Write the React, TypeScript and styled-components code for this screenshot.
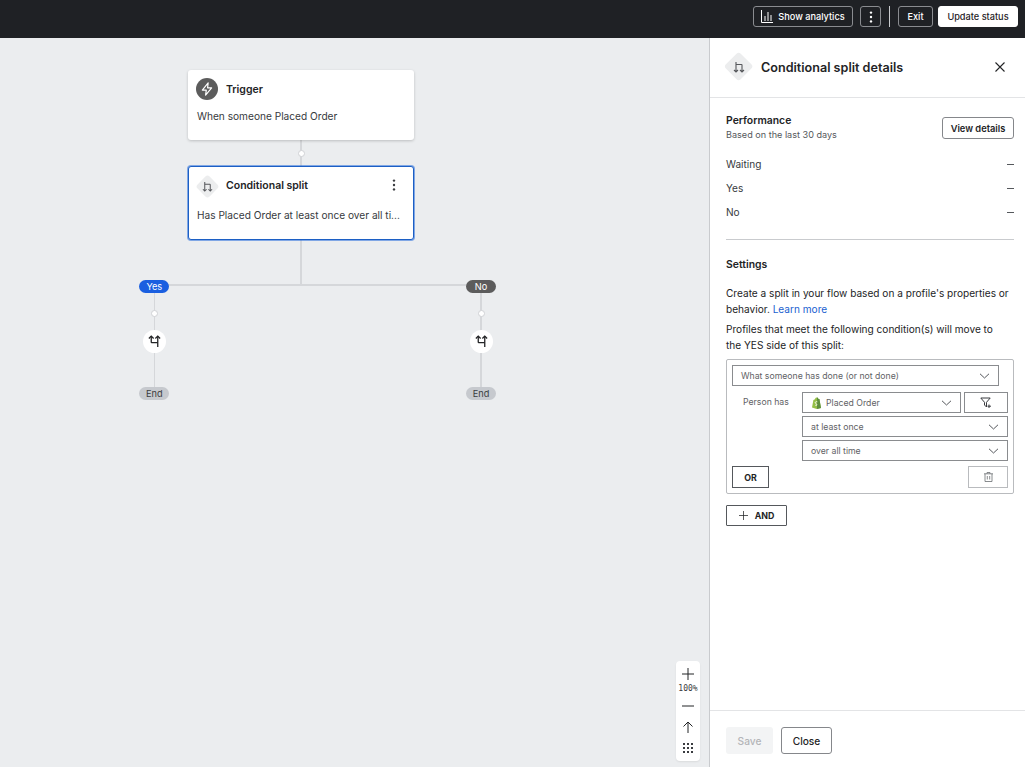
import React from "react";
import styled, { createGlobalStyle } from "styled-components";

const Global = createGlobalStyle`
  html, body { margin: 0; padding: 0; height: 100%; overflow: hidden; }
  body { font-family: Inter, "Liberation Sans", sans-serif; color: #232426; background: #fff; }
  * { box-sizing: border-box; }
`;

const Page = styled.div`
  width: 1025px;
  height: 767px;
  display: flex;
  flex-direction: column;
`;

const TopBar = styled.header`
  height: 38px;
  background: #1f2125;
  display: flex;
  align-items: center;
  justify-content: flex-end;
  padding: 0 7px 5px 0;
  flex: none;
`;

const DarkButton = styled.button<{ $w: number }>`
  width: ${(p) => p.$w}px;
  height: 21px;
  border: 1px solid #8a8c90;
  border-radius: 3px;
  background: transparent;
  color: #fff;
  font: 500 9.2px Inter, sans-serif;
  padding: 0;
  display: flex;
  align-items: center;
  justify-content: center;
  gap: 5px;
`;

const KebabButton = styled(DarkButton)`
  margin-left: 7px;
`;

const ExitButton = styled(DarkButton)`
  margin-right: 5px;
`;

const WhiteButton = styled(DarkButton)`
  background: #fff;
  color: #1f2125;
  border-color: #fff;
`;

const BarDivider = styled.div`
  width: 1px;
  height: 21px;
  background: #c9cbce;
  margin: 0 8px;
`;

const Body = styled.div`
  flex: 1;
  display: flex;
  min-height: 0;
`;

const Canvas = styled.main`
  position: relative;
  flex: 1;
  background: #ebedef;
`;

const Card = styled.div<{ $top: number; $height: number; $selected?: boolean }>`
  position: absolute;
  left: 188px;
  top: ${(p) => p.$top}px;
  width: 226px;
  height: ${(p) => p.$height}px;
  background: #fff;
  border-radius: 3px;
  border: ${(p) => (p.$selected ? "1px solid #1c5fc4" : "none")};
  box-shadow: ${(p) => (p.$selected ? "0 0 0 1px rgba(40, 110, 220, 0.55)" : "0 1px 3px rgba(0, 0, 0, 0.2)")};
  padding: ${(p) => (p.$selected ? "7px 8px 0 7px" : "8px 8px 0")};
`;

const CardHead = styled.div`
  display: flex;
  align-items: center;
  gap: 8px;
  height: 22px;
`;

const CardTitle = styled.div`
  font-size: 10.5px;
  font-weight: 600;
  color: #232426;
  flex: 1;
`;

const CardText = styled.div<{ $gap: number }>`
  margin: ${(p) => p.$gap}px 0 0 1px;
  font-size: 10.15px;
  line-height: 14px;
  color: #373a3e;
  white-space: nowrap;
`;

const RoundIcon = styled.div`
  width: 22px;
  height: 22px;
  border-radius: 50%;
  background: #5c5c5c;
  display: flex;
  align-items: center;
  justify-content: center;
`;

const Diamond = styled.div<{ $size: number }>`
  width: ${(p) => p.$size}px;
  height: ${(p) => p.$size}px;
  flex: none;
  position: relative;
  display: flex;
  align-items: center;
  justify-content: center;
  &::before {
    content: "";
    position: absolute;
    inset: 14.6%;
    background: #ecedee;
    border-radius: 3px;
    transform: rotate(45deg);
  }
  svg { position: relative; }
`;

const CardDiamond = styled(Diamond)`
  margin: 2px -1px 0 -1px;
`;

const CardMenu = styled.span`
  display: flex;
  margin-right: 9px;
`;

const Line = styled.div<{ $x: number; $y: number; $w?: number; $h?: number }>`
  position: absolute;
  left: ${(p) => p.$x}px;
  top: ${(p) => p.$y}px;
  width: ${(p) => p.$w ?? 1.5}px;
  height: ${(p) => p.$h ?? 1.5}px;
  background: #d5d7da;
`;

const Dot = styled.div<{ $x: number; $y: number }>`
  position: absolute;
  left: ${(p) => p.$x - 3.5}px;
  top: ${(p) => p.$y - 3.5}px;
  width: 7px;
  height: 7px;
  border-radius: 50%;
  background: #fff;
  border: 1px solid #d0d2d5;
`;

const Pill = styled.div<{ $x: number; $y: number; $bg: string; $fg: string }>`
  position: absolute;
  left: ${(p) => p.$x - 15}px;
  top: ${(p) => p.$y}px;
  width: 30px;
  height: 13px;
  border-radius: 7px;
  background: ${(p) => p.$bg};
  color: ${(p) => p.$fg};
  font-size: 9.2px;
  line-height: 13px;
  text-align: center;
`;

const BranchNode = styled.div<{ $x: number }>`
  position: absolute;
  left: ${(p) => p.$x - 11.5}px;
  top: 292px;
  width: 23px;
  height: 23px;
  border-radius: 50%;
  background: #fff;
  display: flex;
  align-items: center;
  justify-content: center;
`;

const ZoomBar = styled.div`
  position: absolute;
  left: 676px;
  top: 623px;
  width: 24px;
  height: 100px;
  padding-top: 2px;
  background: #fff;
  border-radius: 4px;
  box-shadow: 0 1px 2px rgba(0, 0, 0, 0.08);
  display: flex;
  flex-direction: column;
  align-items: center;
`;

const ZoomCell = styled.div<{ $h: number }>`
  height: ${(p) => p.$h}px;
  width: 100%;
  flex: none;
  display: flex;
  align-items: center;
  justify-content: center;
`;

const ZoomLabel = styled.div`
  font: 8px/10px "DejaVu Sans Mono", monospace;
  color: #3a3c40;
`;

const Panel = styled.aside`
  width: 316px;
  flex: none;
  border-left: 1px solid #c9cbce;
  background: #fff;
  display: flex;
  flex-direction: column;
`;

const PanelHead = styled.div`
  height: 60px;
  flex: none;
  border-bottom: 1px solid #e3e4e6;
  display: flex;
  align-items: center;
  padding: 0 20px 1px 14px;
  gap: 7px;
`;

const PanelTitle = styled.h1`
  flex: 1;
  margin: 0;
  font-size: 12.6px;
  font-weight: 600;
  color: #232426;
`;

const PanelBody = styled.div`
  flex: 1;
  padding: 17px 11px 0 16px;
`;

const PerfHead = styled.div`
  display: flex;
  justify-content: space-between;
  align-items: center;
  height: 26px;
`;

const SectionTitle = styled.div`
  font-size: 10.4px;
  font-weight: 600;
  line-height: 14px;
  color: #232426;
`;

const SubText = styled.div`
  font-size: 9.1px;
  line-height: 14px;
  color: #55585c;
`;

const OutlineButton = styled.button`
  width: 72px;
  height: 22px;
  padding: 0;
  background: #fff;
  border: 1px solid #85878b;
  border-radius: 3px;
  font: 600 9.3px Inter, sans-serif;
  color: #232426;
`;

const StatList = styled.div`
  margin-top: 11px;
  padding-bottom: 15px;
  border-bottom: 1px solid #c9cbce;
`;

const StatRow = styled.div`
  height: 24px;
  display: flex;
  align-items: center;
  justify-content: space-between;
  font-size: 10.1px;
  color: #373a3e;
`;

const Dash = styled.span`
  width: 7px;
  height: 1px;
  background: #55585c;
`;

const SettingsTitle = styled(SectionTitle)`
  margin-top: 18px;
`;

const Para = styled.p<{ $top: number }>`
  margin: ${(p) => p.$top}px 0 0;
  max-width: 284px;
  font-size: 10.1px;
  line-height: 15.5px;
  color: #232426;
`;

const LearnMore = styled.span`
  color: #1a5fd0;
`;

const RuleBox = styled.div`
  margin-top: 6px;
  width: 288px;
  border: 1px solid #b9bbbe;
  border-radius: 2px;
  padding: 5px;
  display: flex;
  flex-direction: column;
`;

const Select = styled.div<{ $w: number }>`
  width: ${(p) => p.$w}px;
  height: 21px;
  border: 1px solid #8a8c8f;
  display: flex;
  align-items: center;
  justify-content: space-between;
  padding: 0 8px;
  font-size: 8.7px;
  color: #5f6265;
  flex: none;
`;

const SelectLabel = styled.span`
  display: flex;
  align-items: center;
  gap: 4px;
`;

const ConditionGrid = styled.div`
  margin-top: 6px;
  display: grid;
  grid-template-columns: 70px 1fr;
`;

const PersonHas = styled.div`
  font-size: 8.7px;
  line-height: 21px;
  padding-left: 11px;
  color: #5f6265;
`;

const ConditionRows = styled.div`
  display: flex;
  flex-direction: column;
  gap: 3px;
`;

const SelectRow = styled.div`
  display: flex;
  gap: 3px;
`;

const FilterButton = styled.div`
  width: 44px;
  height: 21px;
  border: 1px solid #8a8c8f;
  display: flex;
  align-items: center;
  justify-content: center;
`;

const RuleFooter = styled.div`
  margin-top: 5px;
  display: flex;
  justify-content: space-between;
`;

const SquareButton = styled.div`
  height: 22px;
  width: 37px;
  border: 1px solid #55585c;
  display: flex;
  align-items: center;
  justify-content: center;
  font-size: 8.8px;
  font-weight: 700;
  color: #232426;
`;

const TrashButton = styled(SquareButton)`
  width: 40px;
  border-color: #b9bbbe;
`;

const AndButton = styled(SquareButton)`
  width: 61px;
  height: 21px;
  margin-top: 11px;
  gap: 7px;
  border-radius: 1px;
`;

const PanelFoot = styled.div`
  height: 57px;
  flex: none;
  border-top: 1px solid #e3e4e6;
  display: flex;
  align-items: center;
  gap: 8px;
  padding: 3px 0 0 16px;
`;

const SaveButton = styled.button`
  width: 47px;
  height: 27px;
  border: none;
  border-radius: 3px;
  background: #f3f4f5;
  color: #b3b5b8;
  font: 500 10.2px Inter, sans-serif;
`;

const CloseButton = styled.button`
  width: 51px;
  height: 27px;
  background: #fff;
  border: 1px solid #85878b;
  border-radius: 3px;
  color: #232426;
  font: 500 10.2px Inter, sans-serif;
`;

const SplitIcon = ({ size }: { size: number }) => (
  <svg width={size} height={size} viewBox="0 0 12 12" fill="none" stroke="#55575b" strokeWidth="1.1">
    <path d="M3 1v10M1 9l2 2 2-2" />
    <path d="M3 3.500h5.500q.5 0 .5.5v7M7 9l2 2 2-2" />
  </svg>
);

const BranchIcon = () => (
  <svg width="13" height="13" viewBox="0 0 12 12" fill="none" stroke="#232426" strokeWidth="1.2">
    <path d="M.8 3.200 3 1l2.200 2.200" />
    <path d="M3 1v5.500q0 .5.500.5H9" />
    <path d="M6.800 3.200 9 1l2.200 2.200" />
    <path d="M9 1v10" />
  </svg>
);

const ChartIcon = () => (
  <svg width="12" height="13" viewBox="0 0 12 13" fill="none" stroke="#fff" strokeWidth="1">
    <path d="M.5 0v12.500H12" />
    <path d="M4 6v5M7 2v9M10 5v6" />
  </svg>
);

const Chevron = () => (
  <svg width="11" height="6" viewBox="0 0 11 6" fill="none" stroke="#55585c" strokeWidth="1">
    <path d="M1 .8 5.500 5 10 .8" />
  </svg>
);

const Kebab = ({ color }: { color: string }) => (
  <svg width="4" height="12" viewBox="0 0 4 12" fill={color}>
    <circle cx="2" cy="1.600" r="1.200" />
    <circle cx="2" cy="6" r="1.200" />
    <circle cx="2" cy="10.400" r="1.200" />
  </svg>
);

const PlusIcon = ({ size }: { size: number }) => (
  <svg width={size} height={size} viewBox="0 0 12 12" stroke="#232426" strokeWidth="1">
    <path d="M6 0v12M0 6h12" />
  </svg>
);

const ShopifyIcon = () => (
  <svg width="11" height="12" viewBox="0 0 11 12">
    <path d="M1 10.400 2.400 3c1-.3 1.400-.6 1.700-1.200C4.500.9 5.100.4 5.800.5c.9 0 1.400.8 1.600 1.500l1 .1 1.600 9-4.300.9z" fill="#95bf47" />
    <path d="M8.400 2.100 10 11.100l-4 .9V.6c.8 0 1.300.7 1.500 1.400z" fill="#5e8e3e" />
    <path d="M6.300 4.800c-1.500-.5-2.300.5-2 1.200.3.800 1.700.9 1.600 1.900-.1.700-1 .7-1.700.2" fill="none" stroke="#fff" strokeWidth=".9" />
  </svg>
);

export default function App() {
  return (
    <Page>
      <Global />
      <TopBar>
        <DarkButton $w={100}>
          <ChartIcon />
          Show analytics
        </DarkButton>
        <KebabButton $w={21}>
          <Kebab color="#fff" />
        </KebabButton>
        <BarDivider />
        <ExitButton $w={35}>Exit</ExitButton>
        <WhiteButton $w={80}>Update status</WhiteButton>
      </TopBar>
      <Body>
        <Canvas>
          <Line $x={300.25} $y={102} $h={28} />
          <Dot $x={301} $y={115.7} />
          <Line $x={300.25} $y={202} $h={45} />
          <Line $x={154} $y={246.25} $w={327} />
          <Line $x={153.5} $y={255} $h={98} />
          <Line $x={480.25} $y={255} $h={98} />
          <Dot $x={154.3} $y={275.3} />
          <Dot $x={481} $y={275.3} />

          <Card $top={32} $height={70}>
            <CardHead>
              <RoundIcon>
                <svg width="14" height="14" viewBox="0 0 12 12" fill="none" stroke="#fff" strokeWidth="1" strokeLinejoin="round">
                  <path d="M7 .8 2 7h3.400L4.800 11.200 10 5H6.500z" />
                </svg>
              </RoundIcon>
              <CardTitle>Trigger</CardTitle>
            </CardHead>
            <CardText $gap={9}>When someone Placed Order</CardText>
          </Card>

          <Card $top={128} $height={74} $selected>
            <CardHead>
              <CardDiamond $size={24}>
                <SplitIcon size={11} />
              </CardDiamond>
              <CardTitle>Conditional split</CardTitle>
              <CardMenu>
                <Kebab color="#3a3c40" />
              </CardMenu>
            </CardHead>
            <CardText $gap={12}>Has Placed Order at least once over all ti...</CardText>
          </Card>

          <Pill $x={154.3} $y={242} $bg="#1a5fe0" $fg="#fff">Yes</Pill>
          <Pill $x={481} $y={242} $bg="#5c5c5c" $fg="#fff">No</Pill>
          <BranchNode $x={154.2}><BranchIcon /></BranchNode>
          <BranchNode $x={481}><BranchIcon /></BranchNode>
          <Pill $x={154.3} $y={349} $bg="#c6c9ce" $fg="#3a3c40">End</Pill>
          <Pill $x={481} $y={349} $bg="#c6c9ce" $fg="#3a3c40">End</Pill>

          <ZoomBar>
            <ZoomCell $h={21}><PlusIcon size={12} /></ZoomCell>
            <ZoomLabel>100%</ZoomLabel>
            <ZoomCell $h={23}>
              <svg width="12" height="2" viewBox="0 0 12 2" stroke="#232426"><path d="M0 1h12" /></svg>
            </ZoomCell>
            <ZoomCell $h={20}>
              <svg width="12" height="12" viewBox="0 0 12 12" fill="none" stroke="#232426" strokeWidth="1">
                <path d="M6 12V1M1.500 5.500 6 1l4.500 4.500" />
              </svg>
            </ZoomCell>
            <ZoomCell $h={22}>
              <svg width="12" height="12" viewBox="0 0 12 12" fill="#3a3c40">
                {[1, 5, 9].flatMap((y) =>
                  [1, 5, 9].map((x) => <rect key={`${x}-${y}`} x={x} y={y} width="2" height="2" />)
                )}
              </svg>
            </ZoomCell>
          </ZoomBar>
        </Canvas>

        <Panel>
          <PanelHead>
            <Diamond $size={30}>
              <SplitIcon size={12} />
            </Diamond>
            <PanelTitle>Conditional split details</PanelTitle>
            <svg width="10" height="10" viewBox="0 0 10 10" stroke="#232426" strokeWidth="1.1">
              <path d="M.5.5l9 9M9.500.5l-9 9" />
            </svg>
          </PanelHead>
          <PanelBody>
            <PerfHead>
              <div>
                <SectionTitle>Performance</SectionTitle>
                <SubText>Based on the last 30 days</SubText>
              </div>
              <OutlineButton>View details</OutlineButton>
            </PerfHead>
            <StatList>
              <StatRow>Waiting<Dash /></StatRow>
              <StatRow>Yes<Dash /></StatRow>
              <StatRow>No<Dash /></StatRow>
            </StatList>
            <SettingsTitle>Settings</SettingsTitle>
            <Para $top={14}>
              Create a split in your flow based on a profile's properties or behavior. <LearnMore>Learn more</LearnMore>
            </Para>
            <Para $top={5}>Profiles that meet the following condition(s) will move to the YES side of this split:</Para>
            <RuleBox>
              <Select $w={267}>
                What someone has done (or not done)
                <Chevron />
              </Select>
              <ConditionGrid>
                <PersonHas>Person has</PersonHas>
                <ConditionRows>
                  <SelectRow>
                    <Select $w={159}>
                      <SelectLabel><ShopifyIcon />Placed Order</SelectLabel>
                      <Chevron />
                    </Select>
                    <FilterButton>
                      <svg width="12" height="12" viewBox="0 0 12 12" fill="none" stroke="#3a3c40" strokeWidth="1">
                        <path d="M.8 1h9.400L6.500 5.300V10L4.500 8V5.300z" />
                        <path d="M9 7.500v3.500M7.500 9.200H11" />
                      </svg>
                    </FilterButton>
                  </SelectRow>
                  <Select $w={206}>at least once<Chevron /></Select>
                  <Select $w={206}>over all time<Chevron /></Select>
                </ConditionRows>
              </ConditionGrid>
              <RuleFooter>
                <SquareButton>OR</SquareButton>
                <TrashButton>
                  <svg width="9" height="10" viewBox="0 0 9 10" fill="none" stroke="#6b6e72" strokeWidth=".8">
                    <path d="M0 1.800h9M3 1.800V.5h3v1.300M1 1.800V9.500h7V1.800M3.300 4v3.500M5.700 4v3.500" />
                  </svg>
                </TrashButton>
              </RuleFooter>
            </RuleBox>
            <AndButton>
              <PlusIcon size={9} />
              AND
            </AndButton>
          </PanelBody>
          <PanelFoot>
            <SaveButton>Save</SaveButton>
            <CloseButton>Close</CloseButton>
          </PanelFoot>
        </Panel>
      </Body>
    </Page>
  );
}
